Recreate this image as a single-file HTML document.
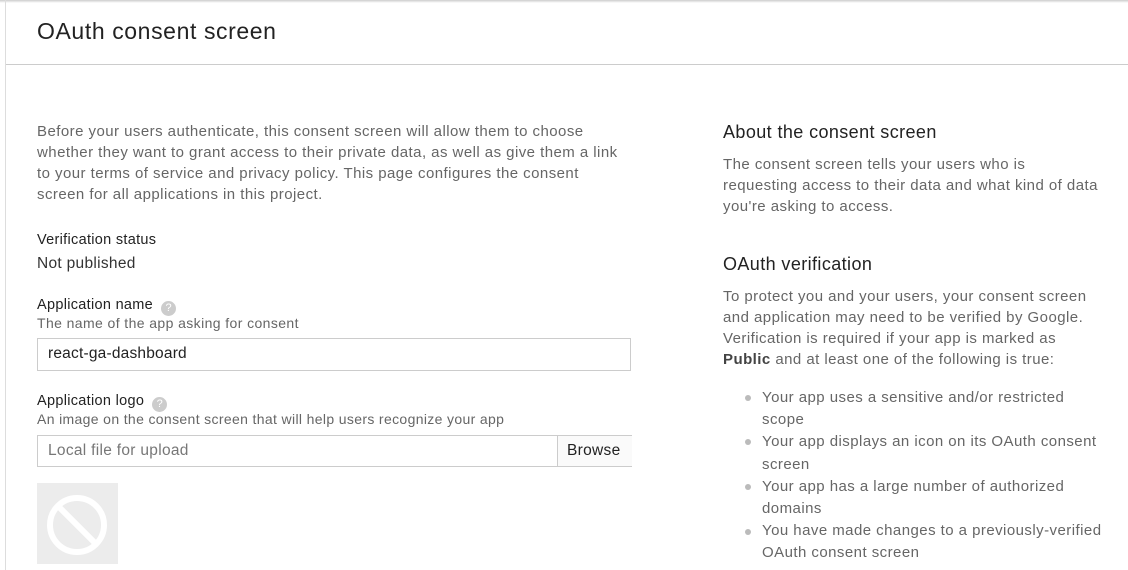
<!DOCTYPE html>
<html><head><style>
body{margin:0;width:1128px;height:570px;overflow:hidden;background:#fff;font-family:"Liberation Sans",sans-serif;position:relative}
.a{position:absolute;white-space:nowrap}
.g{color:#666;font-size:15px;line-height:21px;letter-spacing:0.45px}
.d{color:#222;font-size:14.5px;letter-spacing:0.3px}
.h{color:#222;font-size:18px;letter-spacing:0.4px}
.q{display:inline-block;width:15px;height:15px;border-radius:50%;background:#ccc;color:#fff;font-size:11px;text-align:center;line-height:15px;margin-left:8px;vertical-align:-2px;letter-spacing:0}
.b{position:absolute;left:745px;width:6px;height:6px;border-radius:50%;background:#bbb}
</style></head><body>
<div style="position:absolute;left:0;top:0;width:1128px;height:3px;background:linear-gradient(#ccc,#fff)"></div>
<div style="position:absolute;left:5px;top:0;width:1px;height:570px;background:#ddd"></div>
<div class="a" style="left:37px;top:18px;font-size:23px;color:#222;letter-spacing:0.6px">OAuth consent screen</div>
<div style="position:absolute;left:6px;top:64px;width:1122px;height:1px;background:#ccc"></div>
<div class="a g" style="left:37px;top:121px">Before your users authenticate, this consent screen will allow them to choose<br>whether they want to grant access to their private data, as well as give them a link<br>to your terms of service and privacy policy. This page configures the consent<br>screen for all applications in this project.</div>
<div class="a d" style="left:37px;top:232px">Verification status</div>
<div class="a" style="left:37px;top:255px;font-size:15.5px;color:#333;letter-spacing:0.3px">Not published</div>
<div class="a d" style="left:37px;top:297px">Application name<span class="q">?</span></div>
<div class="a" style="left:37px;top:315px;font-size:14px;color:#666;letter-spacing:0.4px">The name of the app asking for consent</div>
<div style="position:absolute;left:37px;top:338px;width:592px;height:31px;border:1px solid #ccc"></div>
<div class="a" style="left:48px;top:345px;font-size:15.5px;color:#222;letter-spacing:0.2px">react-ga-dashboard</div>
<div class="a d" style="left:37px;top:393px">Application logo<span class="q">?</span></div>
<div class="a" style="left:37px;top:411px;font-size:14px;color:#666;letter-spacing:0.35px">An image on the consent screen that will help users recognize your app</div>
<div style="position:absolute;left:37px;top:435px;width:593px;height:30px;border:1px solid #ccc"></div>
<div style="position:absolute;left:557px;top:436px;width:74px;height:30px;border-left:1px solid #ccc;background:#fafafa"></div>
<div class="a" style="left:48px;top:442px;font-size:15.5px;color:#777;letter-spacing:0.3px">Local file for upload</div>
<div class="a" style="left:567px;top:442px;font-size:15.5px;color:#222;letter-spacing:0.3px">Browse</div>
<div style="position:absolute;left:37px;top:483px;width:81px;height:81px;background:#ececec"></div>
<svg style="position:absolute;left:37px;top:483px" width="81" height="81"><circle cx="40" cy="42" r="27" fill="none" stroke="#fff" stroke-width="6"/><line x1="21" y1="23" x2="59" y2="61" stroke="#fff" stroke-width="6"/></svg>
<div class="a h" style="left:723px;top:122px">About the consent screen</div>
<div class="a g" style="left:723px;top:154px">The consent screen tells your users who is<br>requesting access to their data and what kind of data<br>you're asking to access.</div>
<div class="a h" style="left:723px;top:254px">OAuth verification</div>
<div class="a g" style="left:723px;top:286px">To protect you and your users, your consent screen<br>and application may need to be verified by Google.<br>Verification is required if your app is marked as<br><b style="color:#444">Public</b> and at least one of the following is true:</div>
<div class="a g" style="left:762px;top:387px;line-height:22.2px">Your app uses a sensitive and/or restricted<br>scope<br>Your app displays an icon on its OAuth consent<br>screen<br>Your app has a large number of authorized<br>domains<br>You have made changes to a previously-verified<br>OAuth consent screen</div>
<div class="b" style="top:395px"></div>
<div class="b" style="top:439px"></div>
<div class="b" style="top:484px"></div>
<div class="b" style="top:529px"></div>
</body></html>
